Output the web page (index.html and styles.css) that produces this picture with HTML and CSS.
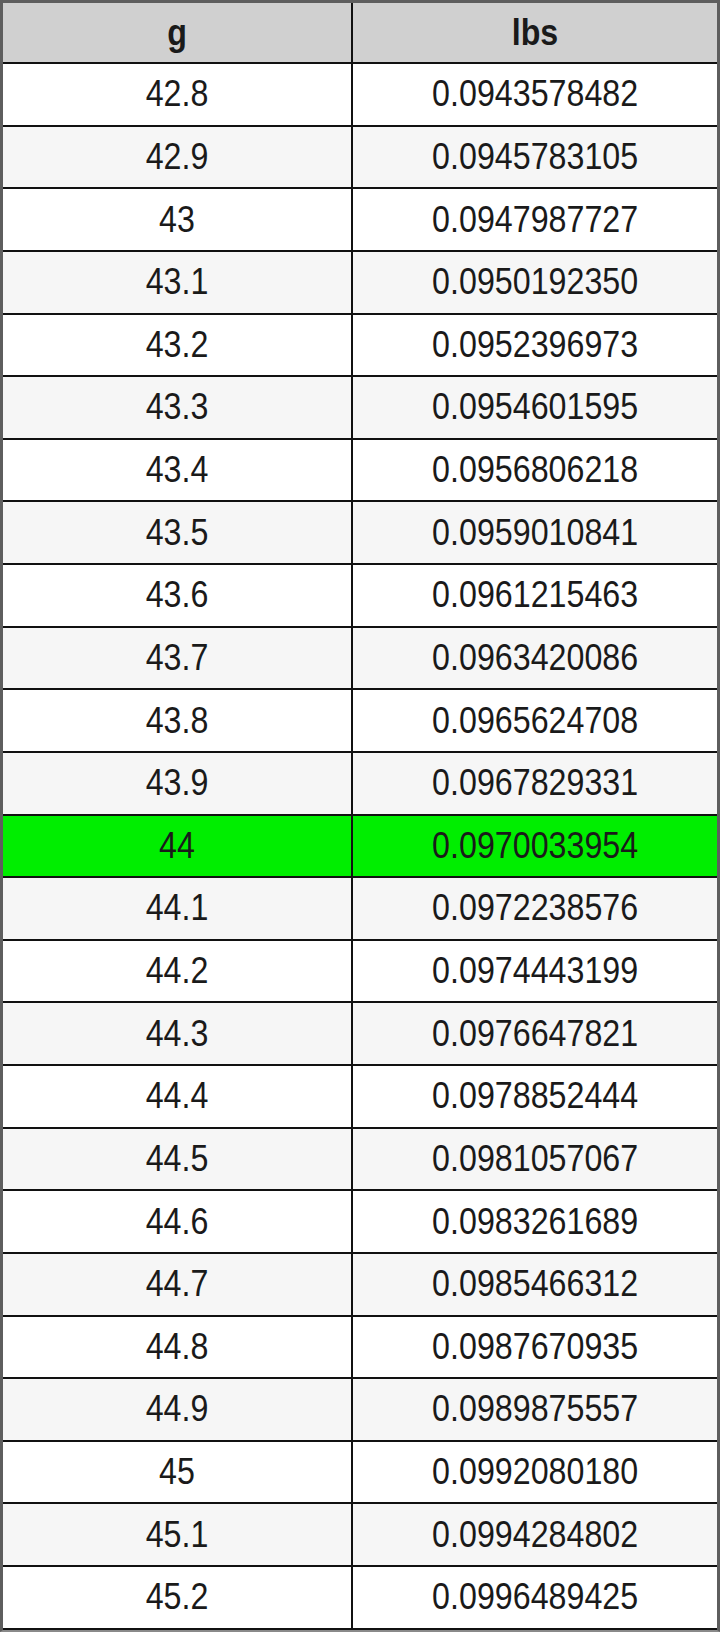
FILE: index.html
```html
<!DOCTYPE html>
<html>
<head>
<meta charset="utf-8">
<title>g to lbs</title>
<link rel="stylesheet" href="styles.css">
</head>
<body>
<div class="table">
  <div class="row head"><div class="cell c1"><span>g</span></div><div class="cell c2"><span>lbs</span></div></div>
  <div class="row"><div class="cell c1"><span>42.8</span></div><div class="cell c2"><span>0.0943578482</span></div></div>
  <div class="row alt"><div class="cell c1"><span>42.9</span></div><div class="cell c2"><span>0.0945783105</span></div></div>
  <div class="row"><div class="cell c1"><span>43</span></div><div class="cell c2"><span>0.0947987727</span></div></div>
  <div class="row alt"><div class="cell c1"><span>43.1</span></div><div class="cell c2"><span>0.0950192350</span></div></div>
  <div class="row"><div class="cell c1"><span>43.2</span></div><div class="cell c2"><span>0.0952396973</span></div></div>
  <div class="row alt"><div class="cell c1"><span>43.3</span></div><div class="cell c2"><span>0.0954601595</span></div></div>
  <div class="row"><div class="cell c1"><span>43.4</span></div><div class="cell c2"><span>0.0956806218</span></div></div>
  <div class="row alt"><div class="cell c1"><span>43.5</span></div><div class="cell c2"><span>0.0959010841</span></div></div>
  <div class="row"><div class="cell c1"><span>43.6</span></div><div class="cell c2"><span>0.0961215463</span></div></div>
  <div class="row alt"><div class="cell c1"><span>43.7</span></div><div class="cell c2"><span>0.0963420086</span></div></div>
  <div class="row"><div class="cell c1"><span>43.8</span></div><div class="cell c2"><span>0.0965624708</span></div></div>
  <div class="row alt"><div class="cell c1"><span>43.9</span></div><div class="cell c2"><span>0.0967829331</span></div></div>
  <div class="row hl"><div class="cell c1"><span>44</span></div><div class="cell c2"><span>0.0970033954</span></div></div>
  <div class="row alt"><div class="cell c1"><span>44.1</span></div><div class="cell c2"><span>0.0972238576</span></div></div>
  <div class="row"><div class="cell c1"><span>44.2</span></div><div class="cell c2"><span>0.0974443199</span></div></div>
  <div class="row alt"><div class="cell c1"><span>44.3</span></div><div class="cell c2"><span>0.0976647821</span></div></div>
  <div class="row"><div class="cell c1"><span>44.4</span></div><div class="cell c2"><span>0.0978852444</span></div></div>
  <div class="row alt"><div class="cell c1"><span>44.5</span></div><div class="cell c2"><span>0.0981057067</span></div></div>
  <div class="row"><div class="cell c1"><span>44.6</span></div><div class="cell c2"><span>0.0983261689</span></div></div>
  <div class="row alt"><div class="cell c1"><span>44.7</span></div><div class="cell c2"><span>0.0985466312</span></div></div>
  <div class="row"><div class="cell c1"><span>44.8</span></div><div class="cell c2"><span>0.0987670935</span></div></div>
  <div class="row alt"><div class="cell c1"><span>44.9</span></div><div class="cell c2"><span>0.0989875557</span></div></div>
  <div class="row"><div class="cell c1"><span>45</span></div><div class="cell c2"><span>0.0992080180</span></div></div>
  <div class="row alt"><div class="cell c1"><span>45.1</span></div><div class="cell c2"><span>0.0994284802</span></div></div>
  <div class="row"><div class="cell c1"><span>45.2</span></div><div class="cell c2"><span>0.0996489425</span></div></div>
</div>
</body>
</html>
```

FILE: styles.css
```css
html, body {
  margin: 0;
  padding: 0;
  background: #ffffff;
}

.table {
  width: 720px;
  box-sizing: border-box;
  border-left: 3px solid #5e5e5e;
  border-right: 3px solid #5e5e5e;
  border-top: 3px solid #5e5e5e;
  border-bottom: 2px solid #8a8a8a;
  font-family: "Liberation Sans", Arial, sans-serif;
  color: #1a1a1a;
}

.row {
  display: flex;
  height: 62.64px;
  box-sizing: border-box;
  border-bottom: 2px solid #111111;
  background: #ffffff;
}

.row.alt {
  background: #f6f6f6;
}

.row.hl {
  background: #00ee00;
}

.row.head {
  height: 61px;
  background: #d0d0d0;
  font-weight: bold;
}

.cell {
  display: flex;
  align-items: center;
  justify-content: center;
  font-size: 36px;
  line-height: 1;
}

.cell span {
  display: inline-block;
  transform: scaleX(0.895);
}

.c1 {
  width: 348px;
  border-right: 2px solid #111111;
}

.c2 {
  flex: 1;
}
```
